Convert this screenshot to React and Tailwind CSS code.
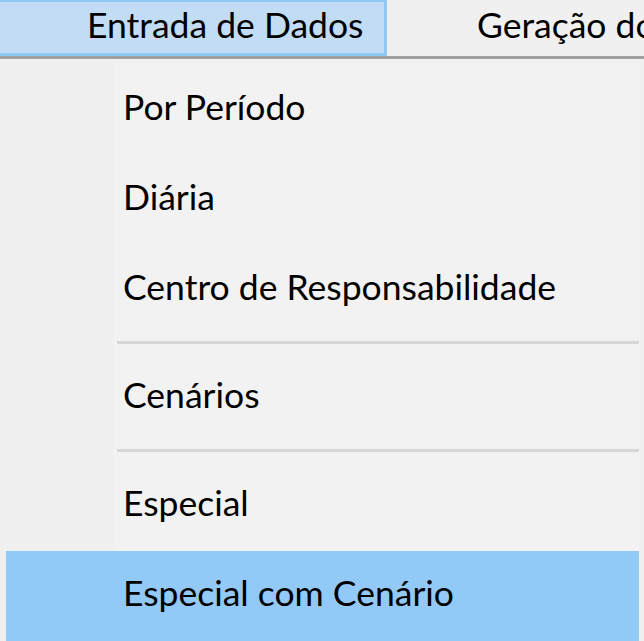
const ITEMS = [
  { label: 'Por Período' },
  { label: 'Diária' },
  { label: 'Centro de Responsabilidade' },
  { sep: true },
  { label: 'Cenários' },
  { sep: true },
  { label: 'Especial' },
  { label: 'Especial com Cenário', active: true },
]

function MenuItem({ label, active }) {
  return (
    <div
      className={
        'h-[90px] flex items-center pb-[6px] pl-[117px] ' +
        (active ? 'bg-[#93c9f6]' : '')
      }
    >
      {label}
    </div>
  )
}

export default function App() {
  return (
    <div className="w-[644px] h-[641px] overflow-hidden bg-[#f0f0f0] text-black text-[35.5px] leading-[1.2] whitespace-nowrap font-['Lato',_'Noto_Sans',_sans-serif]">
      {/* menu bar */}
      <div className="h-[59px] flex items-start border-b-[3px] border-[#a0a0a0]">
        <div className="w-[387px] h-[56px] shrink-0 pl-[87px] pb-[5px] flex items-center bg-[#c1dcf3] border-t-2 border-r-[3px] border-b-[3px] border-[#90c8f6]">
          Entrada de Dados
        </div>
        <div className="h-[56px] pl-[90px] pb-[5px] flex items-center">Geração do</div>
      </div>

      {/* dropdown */}
      <div className="h-[582px] pt-[6px] pl-[6px] pr-[5px] bg-[linear-gradient(to_right,#f0f0f0_114px,#f2f2f2_114px,#f2f2f2_639px,#f0f0f0_639px)]">
        {ITEMS.map((it, i) =>
          it.sep ? (
            <div key={i} className="h-[18px] pt-[6px] pl-[111px]">
              <div className="h-[3px] bg-[#d7d7d7]" />
            </div>
          ) : (
            <MenuItem key={i} label={it.label} active={it.active} />
          )
        )}
      </div>
    </div>
  )
}
